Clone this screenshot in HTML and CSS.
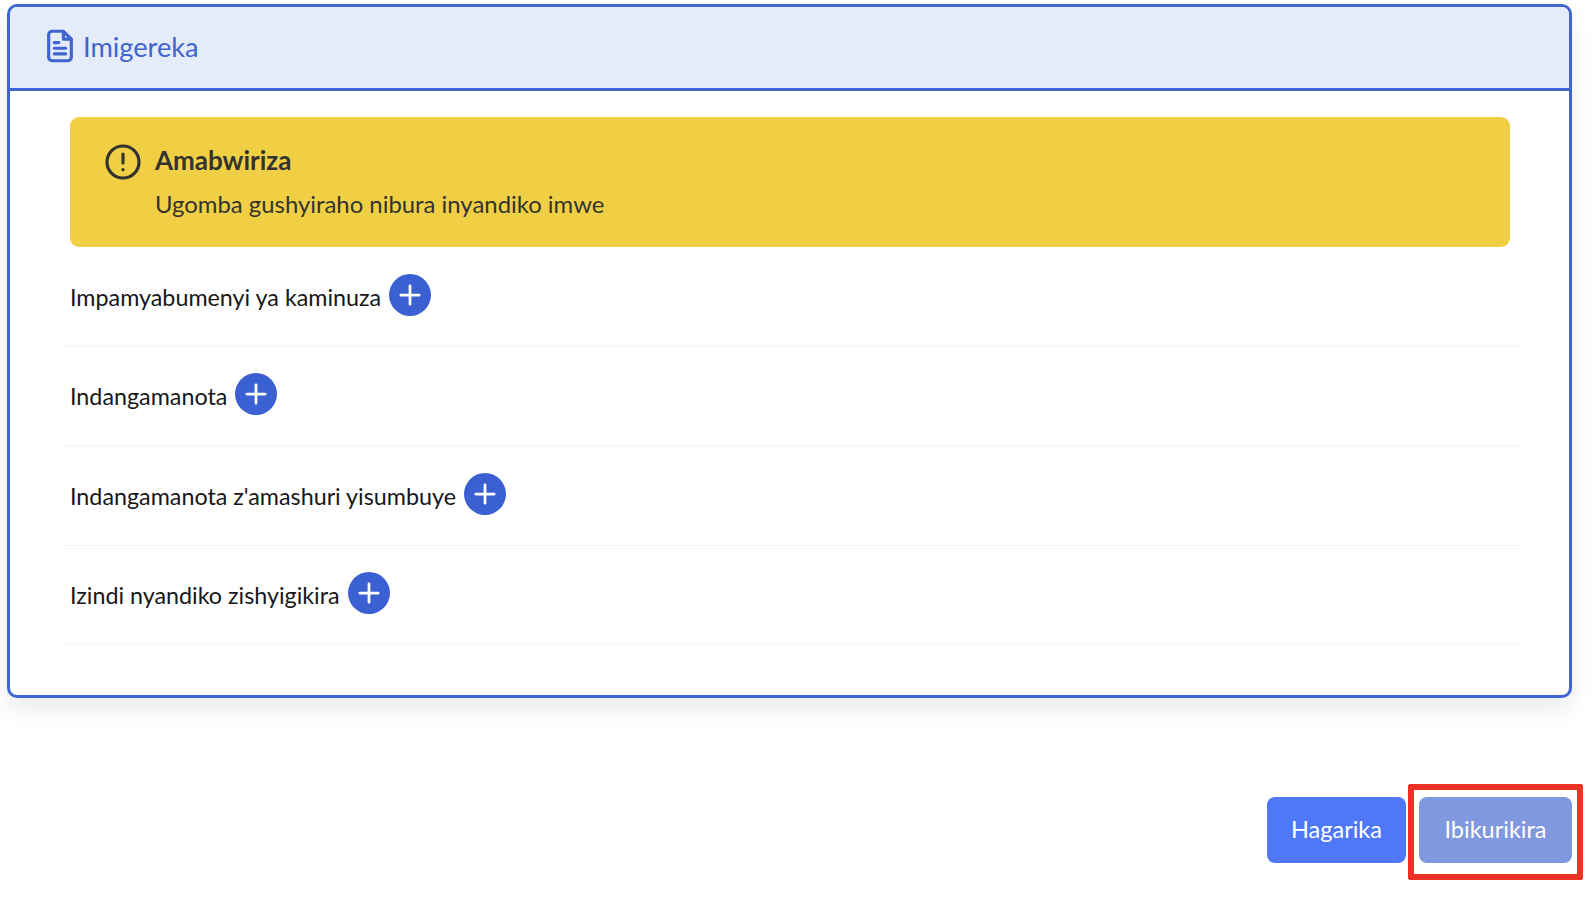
FILE: index.html
```html
<!DOCTYPE html>
<html lang="rw">
<head>
<meta charset="utf-8">
<title>Imigereka</title>
<link rel="stylesheet" href="styles.css">
</head>
<body>
<section class="card">
  <header class="card-head">
    <svg class="doc-icon" viewBox="0 0 24 30" fill="none" stroke="currentColor" stroke-width="2.8" stroke-linecap="round" stroke-linejoin="round"><path d="M15 2H5a3 3 0 0 0-3 3v20a3 3 0 0 0 3 3h14a3 3 0 0 0 3-3V9z"/><path d="M15 2v7h7"/><path d="M7 12h4M7 17h10M7 22h10"/></svg>
    <h1 class="card-title">Imigereka</h1>
  </header>
  <div class="card-body">
    <div class="notice">
      <svg class="notice-icon" viewBox="0 0 36 36" fill="none" stroke="currentColor" stroke-width="3.2" stroke-linecap="round"><circle cx="18" cy="18" r="16"/><path d="M18 10v9"/><path d="M18 25.5v.2"/></svg>
      <div class="notice-text">
        <h2 class="notice-title">Amabwiriza</h2>
        <p class="notice-desc">Ugomba gushyiraho nibura inyandiko imwe</p>
      </div>
    </div>
    <div class="row"><span class="row-label">Impamyabumenyi ya kaminuza</span><button class="add" aria-label="add"><svg viewBox="0 0 24 24" stroke="currentColor" stroke-width="3" stroke-linecap="round"><path d="M12 2v20M2 12h20"/></svg></button></div>
    <div class="row"><span class="row-label">Indangamanota</span><button class="add" aria-label="add"><svg viewBox="0 0 24 24" stroke="currentColor" stroke-width="3" stroke-linecap="round"><path d="M12 2v20M2 12h20"/></svg></button></div>
    <div class="row"><span class="row-label">Indangamanota z'amashuri yisumbuye</span><button class="add" aria-label="add"><svg viewBox="0 0 24 24" stroke="currentColor" stroke-width="3" stroke-linecap="round"><path d="M12 2v20M2 12h20"/></svg></button></div>
    <div class="row"><span class="row-label">Izindi nyandiko zishyigikira</span><button class="add" aria-label="add"><svg viewBox="0 0 24 24" stroke="currentColor" stroke-width="3" stroke-linecap="round"><path d="M12 2v20M2 12h20"/></svg></button></div>
  </div>
</section>
<footer class="actions">
  <button class="btn btn-cancel">Hagarika</button>
  <button class="btn btn-next">Ibikurikira</button>
  <div class="highlight"></div>
</footer>
</body>
</html>
```
FILE: styles.css
```css
* { box-sizing: border-box; }
html, body { margin: 0; height: 100%; }
body {
  background: #fff;
  font-family: "Lato", "Noto Sans", sans-serif;
  padding: 4px 22px 0 7px;
  overflow: hidden;
}
.card {
  height: 694px;
  border: 3.4px solid #3f65d0;
  border-radius: 10px;
  box-shadow: 0 12px 22px rgba(0, 0, 0, 0.08);
  background: #fff;
  overflow: hidden;
}
.card-head {
  height: 84px;
  background: #e4ebf9;
  border-bottom: 3px solid #3f65d0;
  display: flex;
  align-items: center;
  padding-left: 36px;
  color: #3f65d0;
}
.doc-icon { width: 28px; height: 34px; margin-right: 9px; margin-top: -4px; }
.card-title { margin: -2px 0 0; font-size: 27.2px; font-weight: 400; line-height: 32px; }
.card-body { padding: 26px 49px 0 51px; }
.notice {
  margin: 0 10px 0 9px;
  height: 130px;
  background: #f0cf45;
  border-radius: 9px;
  color: #333330;
  display: flex;
  padding: 26px 0 0 35px;
}
.notice-icon { width: 36px; height: 36px; margin-top: 1px; margin-right: 14px; flex: none; }
.notice-title { margin: 1px 0 0; font-size: 26px; font-weight: 700; line-height: 32px; }
.notice-desc { margin: 12px 0 0; font-size: 23.9px; line-height: 32px; }
.row {
  height: 99.5px;
  padding: 26.6px 0 0 9px;
  border-bottom: 1px solid #f4f4f4;
  display: flex;
  align-items: flex-start;
  gap: 8px;
}
.row-label { font-size: 23.3px; line-height: 42px; margin-top: 2.4px; color: #17171a; }
.add {
  width: 42px;
  height: 42px;
  border: 0;
  border-radius: 50%;
  background: #3b60d2;
  color: #fff;
  padding: 10px;
  display: flex;
}
.add svg { width: 22px; height: 22px; }
.actions {
  position: relative;
  display: flex;
  justify-content: flex-end;
  gap: 13px;
  margin-top: 99px;
}
.btn {
  height: 66px;
  border: 0;
  border-radius: 8px;
  padding: 0 0 2px;
  color: #fff;
  font: 400 23.5px "Lato", "Noto Sans", sans-serif;
}
.btn-cancel { width: 139px; background: #4e78f7; }
.btn-next { width: 153px; background: #7f98de; }
.highlight {
  position: absolute;
  right: -11px;
  top: -13px;
  width: 175px;
  height: 96px;
  border: 6px solid #ee3124;
  border-radius: 2px;
  pointer-events: none;
}
```
